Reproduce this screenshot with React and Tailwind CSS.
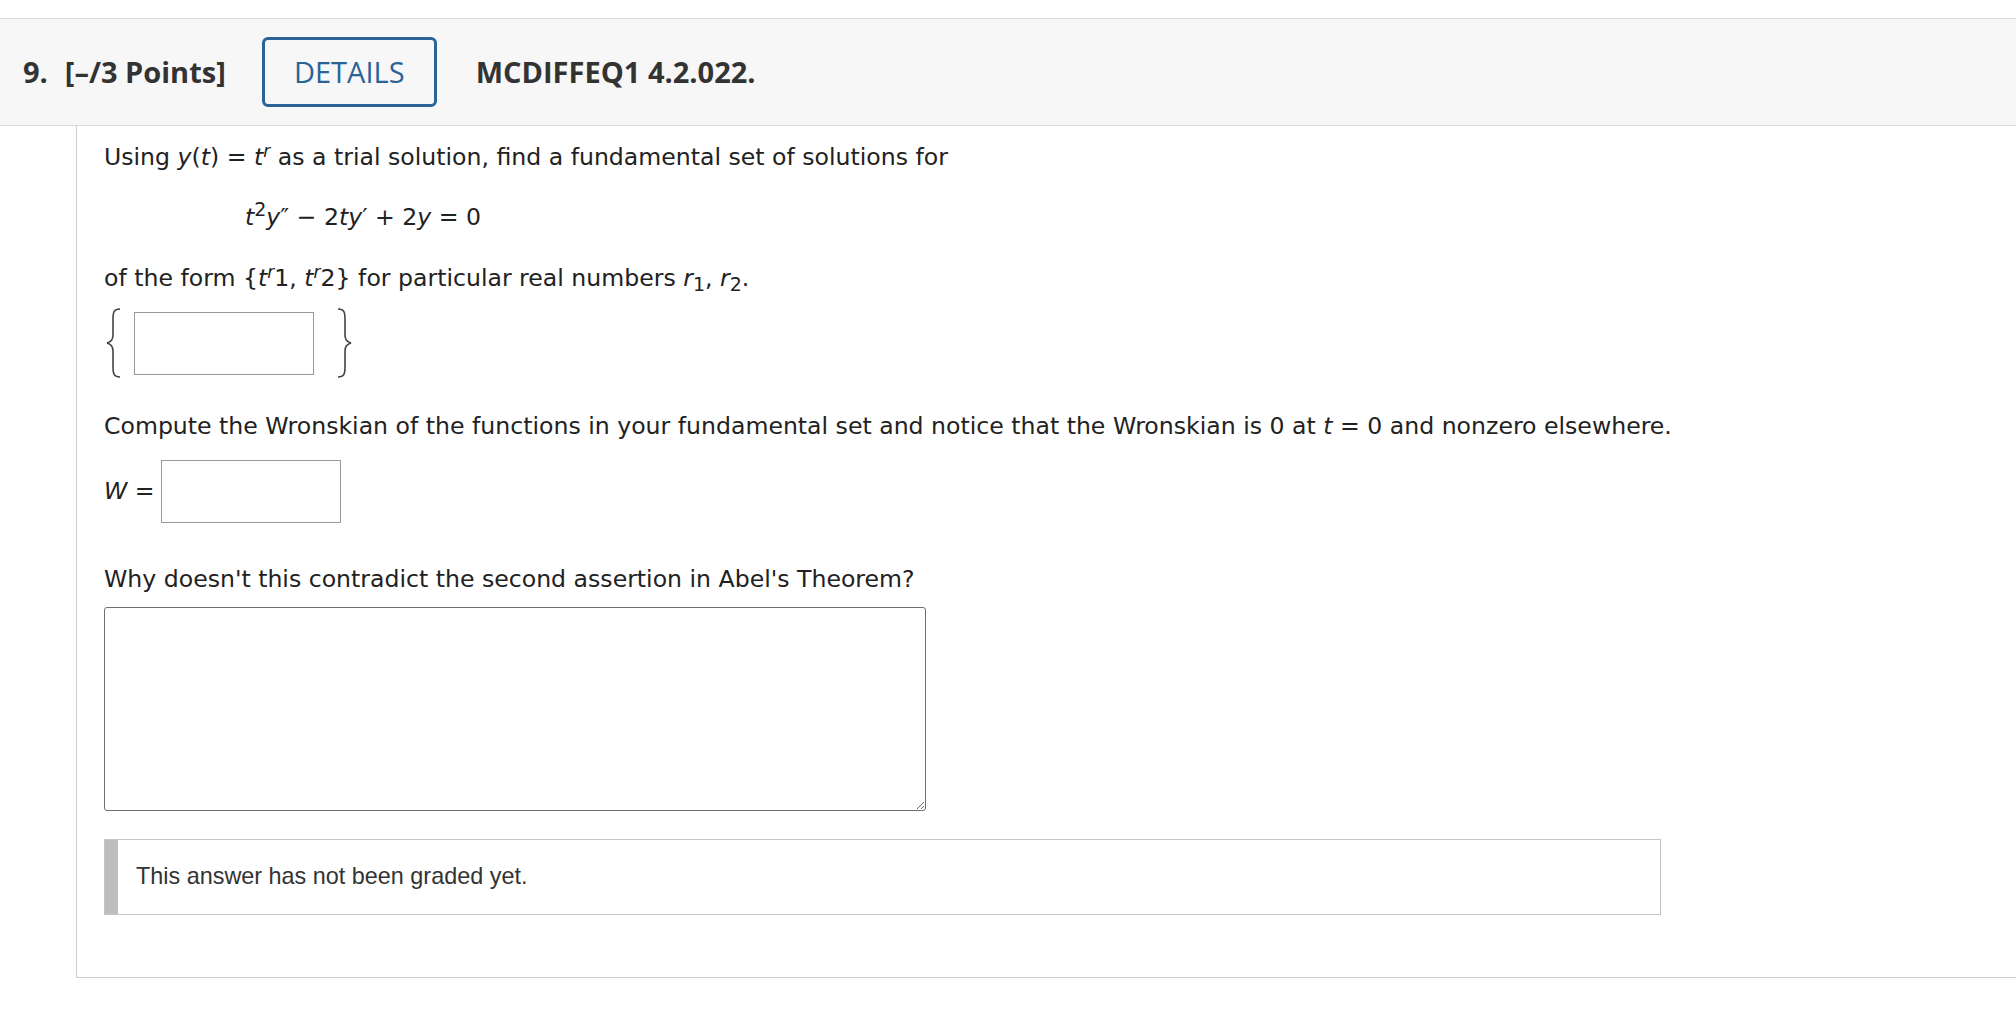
import React from "react";

const body = { fontFamily: '"DejaVu Sans", Verdana, sans-serif' };

const Brace = ({ flip }) => (
  <svg
    width="22"
    height="72"
    viewBox="0 0 22 72"
    className={flip ? "-scale-x-100" : ""}
  >
    <path
      d="M16 2 C10 2 9 5 9 12 L9 28 C9 33 7 35 3 36 C7 37 9 39 9 44 L9 60 C9 67 10 70 16 70"
      fill="none"
      stroke="#444"
      strokeWidth="1.6"
    />
  </svg>
);

const Question = () => {
  return (
    <div className="w-full min-h-screen bg-white pt-[18px]" style={body}>
      {/* HEADER */}
      <div
        className="h-[108px] flex items-center bg-[#f7f7f7] border-y border-[#dcdcdc] pl-[23px] text-[#333] font-bold text-[29px]"
        style={{ fontFamily: '"Open Sans", sans-serif' }}
      >
        <span>9.</span>
        <span className="ml-[17px]">[–/3 Points]</span>
        <button className="ml-[36px] w-[175px] h-[70px] rounded-[6px] border-[3px] border-[#2a6496] text-[#2a6496] font-normal text-[29px] bg-transparent">
          DETAILS
        </button>
        <span className="ml-[39px]">MCDIFFEQ1 4.2.022.</span>
      </div>

      {/* CONTENT */}
      <div className="ml-[76px] border-l border-b border-[#cfcfcf] pl-[27px] pt-[13px] pb-[62px] text-[#222] text-[23.6px]">
        <p className="leading-[36px]">
          Using <i>y</i>(<i>t</i>) = <i>t</i>
          <sup className="text-[17px]">
            <i>r</i>
          </sup>{" "}
          as a trial solution, find a fundamental set of solutions for
        </p>

        <p className="mt-[24px] ml-[141px] leading-[36px]">
          <i>t</i>
          <sup className="text-[19px]">2</sup>
          <i>y</i>″ − 2<i>ty</i>′ + 2<i>y</i> = 0
        </p>

        <p className="mt-[25px] leading-[36px]">
          of the form {"{"}
          <i>t</i>
          <sup className="text-[17px]">
            <i>r</i>
          </sup>
          1, <i>t</i>
          <sup className="text-[17px]">
            <i>r</i>
          </sup>
          2{"}"} for particular real numbers <i>r</i>
          <sub className="text-[19px]">1</sub>, <i>r</i>
          <sub className="text-[19px]">2</sub>.
        </p>

        <div className="mt-[11px] flex items-center">
          <Brace />
          <input
            type="text"
            className="ml-[8px] w-[180px] h-[63px] border border-[#999] outline-none"
          />
          <div className="ml-[18px]">
            <Brace flip />
          </div>
        </div>

        <p className="mt-[29px] leading-[36px]">
          Compute the Wronskian of the functions in your fundamental set and
          notice that the Wronskian is 0 at <i>t</i> = 0 and nonzero elsewhere.
        </p>

        <div className="mt-[16px] flex items-center">
          <span>
            <i>W</i> =
          </span>
          <input
            type="text"
            className="ml-[6px] w-[180px] h-[63px] border border-[#999] outline-none"
          />
        </div>

        <p className="mt-[38px] leading-[36px]">
          Why doesn't this contradict the second assertion in Abel's Theorem?
        </p>

        <textarea className="mt-[10px] block w-[822px] h-[204px] border border-[#6f6f6f] rounded-[3px] outline-none" />

        <div className="mt-[28px] w-[1557px] h-[76px] flex border border-[#c4c4c4]">
          <div className="w-[13px] bg-[#bdbdbd]" />
          <div
            className="flex items-center pl-[18px] text-[23.4px] text-[#333]"
            style={{ fontFamily: '"Liberation Sans", Arial, sans-serif' }}
          >
            This answer has not been graded yet.
          </div>
        </div>
      </div>
    </div>
  );
};

export default function App() {
  return <Question />;
}
